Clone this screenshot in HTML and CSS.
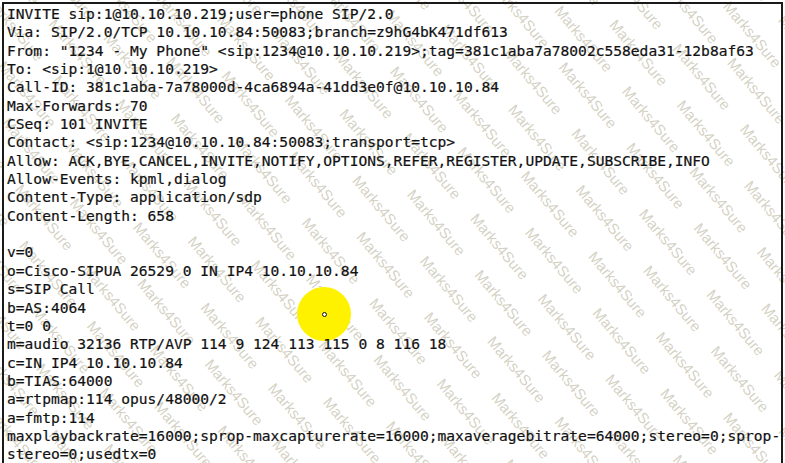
FILE: index.html
```html
<!DOCTYPE html>
<html>
<head>
<meta charset="utf-8">
<link rel="stylesheet" href="styles.css">
</head>
<body>
<div class="wm-clip"><div class="watermark" id="wm"></div></div>
<div class="cursor"><span class="dot"></span></div>
<div class="frame">
<pre class="sip">INVITE sip:1@10.10.10.219;user=phone SIP/2.0
Via: SIP/2.0/TCP 10.10.10.84:50083;branch=z9hG4bK471df613
From: "1234 - My Phone" &lt;sip:1234@10.10.10.219&gt;;tag=381c1aba7a78002c558eda31-12b8af63
To: &lt;sip:1@10.10.10.219&gt;
Call-ID: 381c1aba-7a78000d-4ca6894a-41dd3e0f@10.10.10.84
Max-Forwards: 70
CSeq: 101 INVITE
Contact: &lt;sip:1234@10.10.10.84:50083;transport=tcp&gt;
Allow: ACK,BYE,CANCEL,INVITE,NOTIFY,OPTIONS,REFER,REGISTER,UPDATE,SUBSCRIBE,INFO
Allow-Events: kpml,dialog
Content-Type: application/sdp
Content-Length: 658

v=0
o=Cisco-SIPUA 26529 0 IN IP4 10.10.10.84
s=SIP Call
b=AS:4064
t=0 0
m=audio 32136 RTP/AVP 114 9 124 113 115 0 8 116 18
c=IN IP4 10.10.10.84
b=TIAS:64000
a=rtpmap:114 opus/48000/2
a=fmtp:114
maxplaybackrate=16000;sprop-maxcapturerate=16000;maxaveragebitrate=64000;stereo=0;sprop-
stereo=0;usedtx=0</pre>
</div>
<script src="script.js"></script>
</body>
</html>
```

FILE: styles.css
```css
html, body {
  margin: 0;
  padding: 0;
  background: #ffffff;
  overflow: hidden;
  width: 785px;
  height: 463px;
}

body {
  position: relative;
}

.frame {
  position: relative;
  z-index: 2;
  margin: 2px 2px 0 2px;
  border: 2px solid #1a1a1a;
  border-bottom: none;
  padding: 1px 0 0 3px;
  height: 458px;
  overflow: hidden;
}

.sip {
  margin: 0;
  font-family: "DejaVu Sans Mono", "Liberation Mono", monospace;
  font-size: 14.6px;
  line-height: 18.35px;
  color: #111111;
  -webkit-text-stroke: 0.2px #111111;
  white-space: pre;
}

.wm-clip {
  position: absolute;
  z-index: 0;
  left: 0;
  top: 0;
  width: 785px;
  height: 463px;
  overflow: hidden;
  pointer-events: none;
}

.watermark {
  position: absolute;
  left: 50%;
  top: 50%;
  width: 1300px;
  height: 1300px;
  margin: -650px 0 0 -650px;
  transform: rotate(50deg);
}

.wm-row {
  font-family: "Liberation Sans", Arial, sans-serif;
  font-size: 15px;
  line-height: 33px;
  white-space: nowrap;
  word-spacing: 20px;
  color: rgba(150, 145, 110, 0.42);
}

.wm-row.shift {
  margin-left: -46px;
}

.cursor {
  position: absolute;
  z-index: 1;
  left: 297px;
  top: 287px;
  width: 54px;
  height: 54px;
  border-radius: 50%;
  background: #fff200;
  display: flex;
  align-items: center;
  justify-content: center;
}

.dot {
  width: 3px;
  height: 3px;
  border: 1.5px solid #111111;
  border-radius: 50%;
  background: #ffffff;
}
```

FILE: script.js
```js
(function () {
  var wm = document.getElementById('wm');
  var html = '';
  var words = [];
  for (var i = 0; i < 16; i++) words.push('Marks4Sure');
  var line = words.join(' ');
  for (var r = 0; r < 40; r++) {
    html += '<div class="wm-row' + (r % 2 ? ' shift' : '') + '">' + line + '</div>';
  }
  wm.innerHTML = html;
})();
```
